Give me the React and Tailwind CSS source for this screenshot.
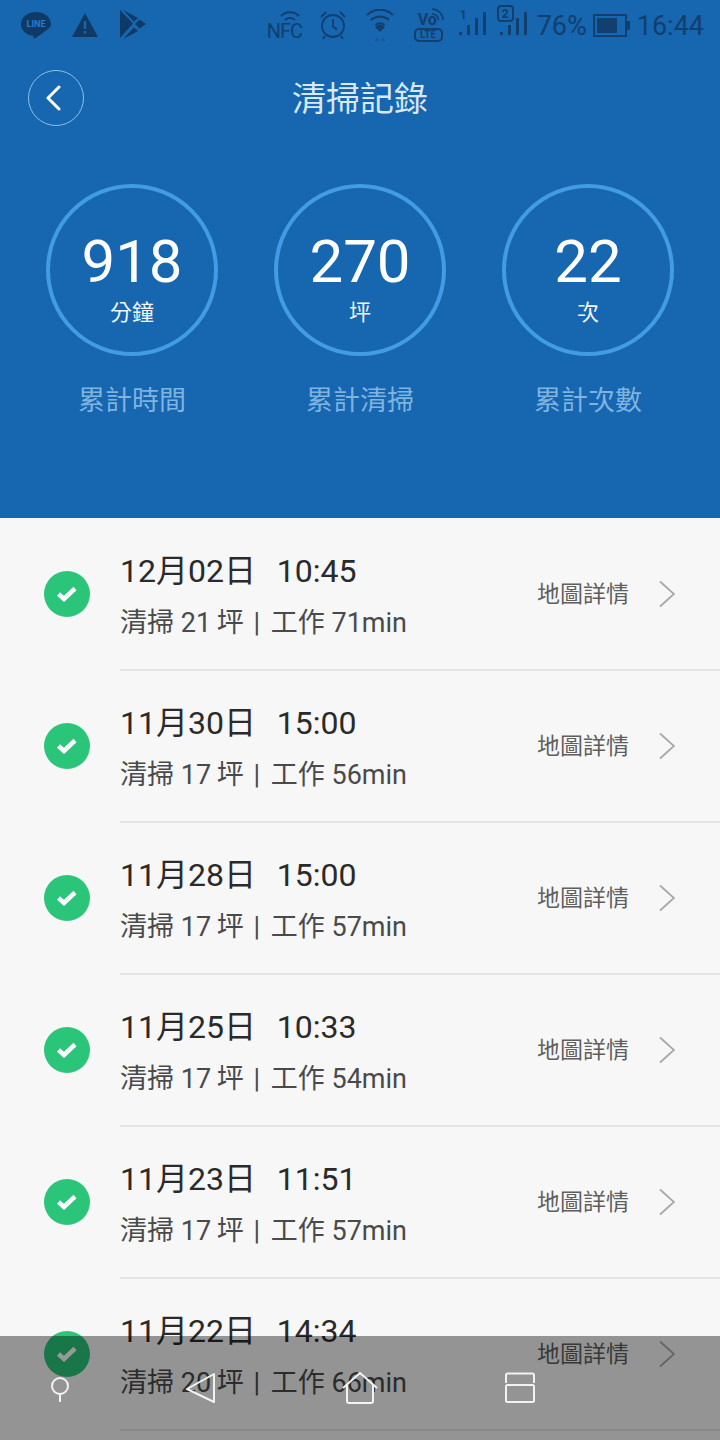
const CJK = "font-['Roboto','Noto_Sans_CJK_TC',sans-serif]";

const stats = [
  { value: '918', unit: '分鐘', label: '累計時間' },
  { value: '270', unit: '坪', label: '累計清掃' },
  { value: '22', unit: '次', label: '累計次數' },
];

const records = [
  { date: '12月02日', time: '10:45', area: '21', work: '71' },
  { date: '11月30日', time: '15:00', area: '17', work: '56' },
  { date: '11月28日', time: '15:00', area: '17', work: '57' },
  { date: '11月25日', time: '10:33', area: '17', work: '54' },
  { date: '11月23日', time: '11:51', area: '17', work: '57' },
  { date: '11月22日', time: '14:34', area: '20', work: '66' },
];

const Signal = ({ label, boxed }) => (
  <div className="relative w-[30px] h-[36px]">
    <svg className="absolute left-0 top-0" width="30" height="36" viewBox="0 0 30 36" fill="#123f6d">
      <rect x="1" y="25" width="3" height="3" />
      <rect x="9" y="18" width="3" height="10" />
      <rect x="17" y="11" width="3" height="17" />
      <rect x="25" y="5" width="3" height="23" />
    </svg>
    {boxed ? (
      <span className="absolute left-[-2px] top-[-2px] w-[17px] h-[17px] border-2 border-[#123f6d] rounded-[4px] flex items-center justify-center text-[12px] leading-none font-bold text-[#123f6d]">{label}</span>
    ) : (
      <span className="absolute left-[2px] top-[2px] text-[12px] leading-none font-bold text-[#123f6d]">{label}</span>
    )}
  </div>
);

const StatusBar = () => (
  <div className="h-[50px] flex items-center justify-between pl-[20px] pr-[16px] text-[#123f6d]">
    <div className="flex items-center gap-[20px]">
      <div className="relative w-[32px] h-[32px] mt-[1px]">
        <svg width="32" height="32" viewBox="0 0 32 32" fill="#0f3a66">
          <path d="M16 2C7.5 2 1 7.4 1 14.2c0 6 5 10.6 12 11.6.8.2.7 1.4.6 3 1.5-.2 6-3.300 11-7.300C28.500 19 31 16.900 31 14.200 31 7.400 24.500 2 16 2z" />
        </svg>
        <span className="absolute left-0 right-0 top-[9px] text-center text-[9px] leading-[10px] font-bold text-[#2d7cc4]">LINE</span>
      </div>
      <svg width="26" height="26" viewBox="0 0 26 26">
        <path d="M13 1L26 25H0z" fill="#0f3a66" />
        <rect x="11.800" y="9" width="2.400" height="8" fill="#1666b0" />
        <rect x="11.800" y="19" width="2.400" height="2.600" fill="#1666b0" />
      </svg>
      <svg className="ml-[2px]" width="26" height="30" viewBox="0 0 26 30" fill="#0f3a66">
        <path d="M0 0l13 13.500L0 28z" />
        <path d="M3 0l11 11.500 4-3.500z" />
        <path d="M19.500 9.500L26 14l-6.500 4.500L15 14z" />
        <path d="M3 29l11-11.500 4 3.500z" />
      </svg>
    </div>
    <div className="flex items-center">
      <div className="relative w-[36px] h-[30px]">
        <svg className="absolute left-[15px] top-0" width="20" height="12" viewBox="0 0 20 12" fill="none" stroke="#123f6d" strokeWidth="1.800">
          <path d="M1 6c5-5 13-5 18 0M5 10c3-2.500 7-2.500 10 0" />
        </svg>
        <span className="absolute left-[2px] bottom-[-1px] text-[20px] leading-none text-[#123f6d] tracking-[-1px]">NFC</span>
      </div>
      <svg className="ml-[18px]" width="28" height="30" viewBox="0 0 28 30" fill="none" stroke="#123f6d" strokeWidth="1.800">
        <circle cx="14" cy="16" r="11" />
        <path d="M14 9v7.500l4 3M2 7l5-5M26 7l-5-5M6 26l-2 3M22 26l2 3" />
      </svg>
      <svg className="ml-[19px]" width="28" height="32" viewBox="0 0 28 32" fill="none" stroke="#123f6d" strokeWidth="2.200">
        <path d="M1 6c7.500-7 18.500-7 26 0M5 11c5-4.500 13-4.500 18 0M9.500 16c2.500-2.300 6.500-2.300 9 0" />
        <path d="M14 23l-5-5c3-2.600 7-2.600 10 0z" fill="#123f6d" stroke="none" />
        <path d="M9 32l2-3.500 2 3.500zM15 32l2-3.500 2 3.500z" fill="#1c5590" stroke="none" />
      </svg>
      <div className="relative ml-[20px] w-[30px] h-[36px]">
        <span className="absolute left-[4px] top-[5px] text-[16px] leading-none font-bold text-[#123f6d]">Vo</span>
        <svg className="absolute left-[15px] top-0" width="16" height="16" viewBox="0 0 16 16" fill="none" stroke="#123f6d" strokeWidth="1.600">
          <path d="M3 2c6 0 11 5 11 11M3 7c3.500 0 6.500 2.500 6.500 6" />
        </svg>
        <span className="absolute left-0 bottom-[1px] w-[29px] h-[14px] border-2 border-[#123f6d] rounded-[5px] flex items-center justify-center text-[10px] leading-none font-bold text-[#123f6d]">LTE</span>
      </div>
      <div className="ml-[14px]"><Signal label="1" /></div>
      <div className="ml-[11px]"><Signal label="2" boxed /></div>
      <span className="ml-[8px] mt-[2px] text-[27px] leading-none text-[#123f6d]">76%</span>
      <div className="ml-[6px] w-[34px] h-[23px] border-2 border-[#123f6d] p-[2px] relative">
        <div className="w-[76%] h-full bg-[#123f6d]" />
        <div className="absolute right-[-5px] top-[5px] w-[3px] h-[9px] bg-[#123f6d]" />
      </div>
      <span className="ml-[10px] mt-[2px] text-[27px] leading-none text-[#123f6d]">16:44</span>
    </div>
  </div>
);

const RecordRow = ({ record }) => (
  <div className="h-[152px] flex items-center pl-[44px]">
    <div className="w-[46px] h-[46px] mb-[2px] rounded-full bg-[#2bc57a] flex items-center justify-center shrink-0">
      <svg width="24" height="20" viewBox="0 0 24 20" fill="none" stroke="#ffffff" strokeWidth="4.500">
        <path d="M3.500 10l5.500 5L20 4.500" />
      </svg>
    </div>
    <div className="ml-[30px] flex-1 h-full border-b-2 border-[#e4e4e4] flex items-center pr-[45px]">
      <div className="flex-1 pt-[4px]">
        <div className="text-[32px] leading-[40px] text-[#2a2a2a] whitespace-pre">
          {record.date}  <span className="ml-[5px]">{record.time}</span>
        </div>
        <div className="mt-[14px] text-[27px] leading-[36px] text-[#4a4a4a] whitespace-pre">
          清掃 {record.area} <span className="ml-[-1px]">坪</span> <span className="ml-[3px] mr-[4px]">|</span> 工作 {record.work}min
        </div>
      </div>
      <span className="text-[23px] leading-none text-[#5f5f5f]">地圖詳情</span>
      <svg className="ml-[30px]" width="16" height="28" viewBox="0 0 16 28" fill="none" stroke="#a8a8a8" strokeWidth="1.800">
        <path d="M1 1.500L15 14 1 26.500" />
      </svg>
    </div>
  </div>
);

const NavBar = () => (
  <div className="absolute left-0 right-0 top-[1336px] h-[104px] bg-black/40">
    <div className="relative h-full">
      <svg className="absolute left-[49px] top-[40px]" width="22" height="26" viewBox="0 0 22 26" fill="none" stroke="#f2f2f2" strokeWidth="2">
        <circle cx="11" cy="10" r="8" />
        <path d="M11 18v8" />
      </svg>
      <svg className="absolute left-[184px] top-[36px]" width="34" height="32" viewBox="0 0 34 32" fill="none" stroke="#f2f2f2" strokeWidth="2" strokeLinejoin="round">
        <path d="M30 2L3 17l27 13z" />
      </svg>
      <svg className="absolute left-[340px] top-[35px]" width="40" height="34" viewBox="0 0 40 34" fill="none" stroke="#f2f2f2" strokeWidth="2" strokeLinejoin="round">
        <path d="M3 17L20 2l17 15M7 14v16a2 2 0 0 0 2 2h22a2 2 0 0 0 2-2V14" />
      </svg>
      <svg className="absolute left-[503px] top-[36px]" width="34" height="32" viewBox="0 0 34 32" fill="none" stroke="#f2f2f2" strokeWidth="2">
        <path d="M3 11V3a1.500 1.500 0 0 1 1.500-1.500h25A1.500 1.500 0 0 1 31 3v8" />
        <rect x="3" y="13" width="28" height="17" rx="1.500" />
      </svg>
    </div>
  </div>
);

export default function App() {
  return (
    <div className={`relative w-[720px] h-[1440px] overflow-hidden bg-[#f7f7f7] ${CJK}`}>
      <div className="h-[518px] bg-[#1666b0]">
        <StatusBar />
        <div className="h-[96px] flex items-center relative">
          <button className="ml-[28px] w-[56px] h-[56px] rounded-full border border-[#8fc0ea] flex items-center justify-center">
            <svg className="ml-[-4px]" width="18" height="26" viewBox="0 0 18 26" fill="none" stroke="#ffffff" strokeWidth="3" strokeLinecap="round" strokeLinejoin="round">
              <path d="M14 2L3 13l11 11" />
            </svg>
          </button>
          <h1 className="absolute left-0 right-0 mt-[1px] text-center text-[34px] leading-none font-normal text-[#d8e8f6]">清掃記錄</h1>
        </div>
        <div className="mt-[38px] px-[18px] grid grid-cols-3">
          {stats.map((stat) => (
            <div key={stat.label} className="flex flex-col items-center">
              <div className="w-[172px] h-[172px] rounded-full border-4 border-[#419ce4] flex flex-col items-center justify-center">
                <span className="text-[60px] leading-[60px] text-white mt-[19px]">{stat.value}</span>
                <span className="text-[22px] leading-[28px] text-[#f0f6fc] mt-[7px]">{stat.unit}</span>
              </div>
              <span className="mt-[27px] text-[27px] leading-[36px] text-[#7fb3e0]">{stat.label}</span>
            </div>
          ))}
        </div>
      </div>
      <div className="pt-[1px]">
        {records.map((record) => (
          <RecordRow key={record.date} record={record} />
        ))}
      </div>
      <NavBar />
    </div>
  );
}
